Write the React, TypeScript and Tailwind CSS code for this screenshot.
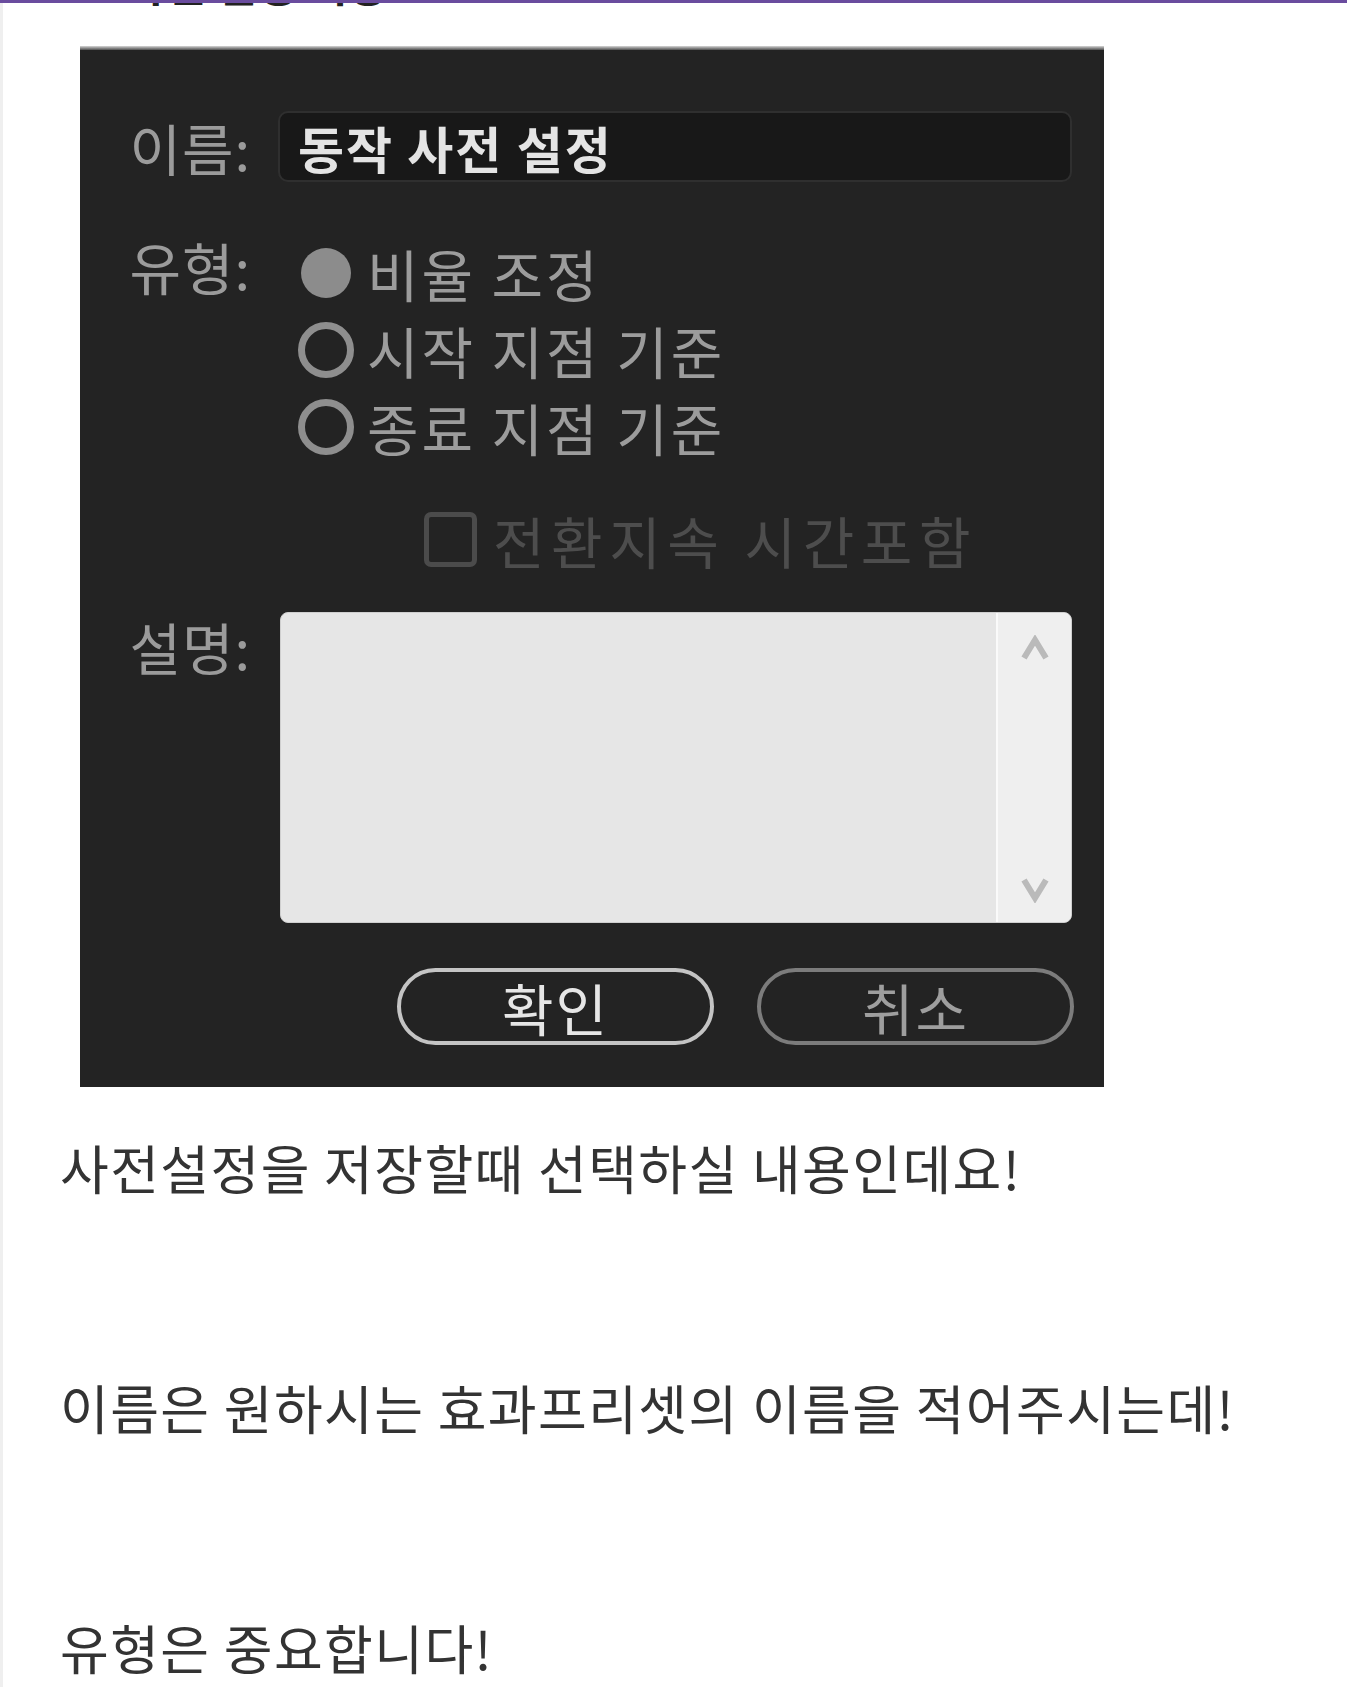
import React from "react";

function Radio({ checked, label }: { checked?: boolean; label: string }) {
  return (
    <div className="flex items-center h-[77px]">
      <div className="w-[56px] h-[56px] flex items-center justify-center">
        {checked ? (
          <div className="w-[50px] h-[50px] rounded-full bg-[#8c8c8c]" />
        ) : (
          <div className="w-[56px] h-[56px] rounded-full border-[7px] border-[#8e8e8e]" />
        )}
      </div>
      <span className="ml-[13px] text-[56px] leading-none tracking-[3px] text-[#9c9c9c] whitespace-pre">{label}</span>
    </div>
  );
}

export default function App() {
  return (
    <div className="min-h-[1690px] bg-white font-['Noto_Sans_CJK_KR',sans-serif]">
      <div className="h-[3px] bg-[#6a4c9e]" />
      <div className="flex">
        <div className="w-[3px] bg-[#efefef] self-stretch" />
        <div className="flex-1 flex flex-col">
          <div className="h-[43px] overflow-hidden">
            <div className="ml-[122px] -mt-[42px] text-[44px] leading-none font-bold text-[#222]">사전 설정 저장</div>
          </div>

          {/* dialog */}
          <div className="ml-[77px] w-[1024px] h-[1041px] bg-[#232323] flex flex-col">
            <div className="h-[4px] bg-linear-to-b from-[#d8d8d8] to-[#505050]" />

            {/* name row */}
            <div className="flex items-center mt-[61px]">
              <div className="w-[171px] text-right text-[56px] leading-none tracking-[1px] text-[#9b9b9b]">이름:</div>
              <div className="ml-[27px] w-[794px] h-[71px] rounded-[10px] bg-[#181818] border-2 border-[#2f2f2f] flex items-center pl-[18px]">
                <span className="text-[50px] leading-none font-bold tracking-[2px] text-[#e4e4e4] whitespace-pre">동작 사전 설정</span>
              </div>
            </div>

            {/* type row */}
            <div className="flex mt-[52px]">
              <div className="w-[171px] text-right text-[56px] leading-[77px] tracking-[1px] -mt-[7px] text-[#9b9b9b]">유형:</div>
              <div className="ml-[47px] flex flex-col">
                <Radio checked label="비율 조정" />
                <Radio label="시작 지점 기준" />
                <Radio label="종료 지점 기준" />
              </div>
            </div>

            {/* checkbox row */}
            <div className="flex items-center h-[77px] mt-[36px] pl-[344px]">
              <div className="w-[53px] h-[55px] border-[5px] border-[#4b4b4b] rounded-[7px]" />
              <span className="ml-[16px] text-[56px] leading-none tracking-[6.6px] text-[#4d4d4d] whitespace-pre">전환지속 시간포함</span>
            </div>

            {/* description row */}
            <div className="flex items-start mt-[34px]">
              <div className="w-[171px] text-right text-[56px] leading-[68px] tracking-[1px] text-[#9b9b9b]">설명:</div>
              <div className="ml-[29px] w-[792px] h-[311px] rounded-[8px] bg-[#e6e6e6] border border-[#cfcfcf] flex overflow-hidden">
                <div className="flex-1" />
                <div className="w-[75px] bg-[#efefef] border-l-2 border-[#fafafa] flex flex-col items-center justify-between pt-[22px] pb-[19px]">
                  <svg width="30" height="26" viewBox="0 0 30 26">
                    <polyline points="4,23 15,5 26,23" fill="none" stroke="#bababa" strokeWidth="6" />
                  </svg>
                  <svg width="30" height="26" viewBox="0 0 30 26">
                    <polyline points="4,3 15,21 26,3" fill="none" stroke="#bababa" strokeWidth="6" />
                  </svg>
                </div>
              </div>
            </div>

            {/* buttons */}
            <div className="flex mt-[45px] pl-[317px] gap-[43px]">
              <div className="w-[317px] h-[77px] rounded-full border-[4px] border-[#c4c4c4] flex items-center justify-center text-[56px] leading-none tracking-[2px] text-[#e6e6e6]">확인</div>
              <div className="w-[317px] h-[77px] rounded-full border-[4px] border-[#7c7c7c] flex items-center justify-center text-[56px] leading-none tracking-[2px] text-[#9e9e9e]">취소</div>
            </div>
          </div>

          {/* paragraphs */}
          <div className="mt-[40px] pl-[57px] text-[53px] leading-[80px] tracking-[1.4px] text-[#333333]">
            <p>사전설정을 저장할때 선택하실 내용인데요!</p>
            <p>&nbsp;</p>
            <p>&nbsp;</p>
            <p>이름은 원하시는 효과프리셋의 이름을 적어주시는데!</p>
            <p>&nbsp;</p>
            <p>&nbsp;</p>
            <p>유형은 중요합니다!</p>
          </div>
        </div>
      </div>
    </div>
  );
}
